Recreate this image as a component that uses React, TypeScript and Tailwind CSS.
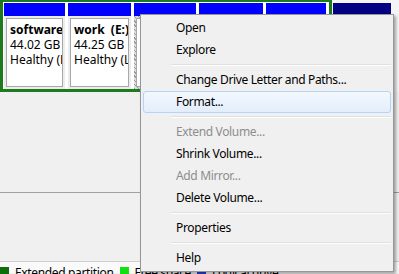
const volumes = [
  { w: 'w-[61px]', name: 'software (D:)', size: '44.02 GB NTFS', status: 'Healthy (Logical Drive)' },
  { w: 'w-[63px]', name: 'work  (E:)', size: '44.25 GB NTFS', status: 'Healthy (Logical Drive)' },
  { w: 'w-[62px]', name: 'media (F:)', size: '40.00 GB NTFS', status: 'Healthy (Logical Drive)', selected: true },
  { w: 'w-[64px]', name: 'games (G:)', size: '40.00 GB NTFS', status: 'Healthy (Logical Drive)' },
  { w: 'w-[60px]', name: 'backup (H:)', size: '30.00 GB NTFS', status: 'Healthy (Logical Drive)' },
];

const menu: ({ label: string; disabled?: boolean; active?: boolean } | 'sep')[] = [
  { label: 'Open' },
  { label: 'Explore' },
  'sep',
  { label: 'Change Drive Letter and Paths...' },
  { label: 'Format...', active: true },
  'sep',
  { label: 'Extend Volume...', disabled: true },
  { label: 'Shrink Volume...' },
  { label: 'Add Mirror...', disabled: true },
  { label: 'Delete Volume...' },
  'sep',
  { label: 'Properties' },
  'sep',
  { label: 'Help' },
];

const App = () => {
  return (
    <div className="relative w-[399px] h-[274px] overflow-hidden bg-[#f0f0f0] font-['Noto_Sans',sans-serif] text-[12px] tracking-[-0.35px] text-black">
      {/* disk strip */}
      <div className="flex h-[92px] bg-[#f4f4f4]">
        <div className="flex gap-[3px] w-[332px] h-full border-[3px] border-t-[2px] border-[#1d7a1d] bg-white pl-[1px] pt-[1px]">
          {volumes.map((v) => (
            <div key={v.name} className={`${v.w} flex flex-col shrink-0`}>
              <div className="h-[13px] bg-[#0000ff]" />
              <div
                className={`flex-1 p-[2px] ${v.selected ? 'bg-[repeating-linear-gradient(45deg,#9a9a9a_0_1px,#dcdcdc_1px_3px)]' : 'bg-[#ececec]'}`}
              >
                <div className="h-full border border-[#a8a8a8] bg-white pl-[3px] pt-[3px] overflow-hidden whitespace-pre leading-[15px] tracking-normal">
                  <div className="font-bold">{v.name}</div>
                  <div>{v.size}</div>
                  <div>{v.status}</div>
                </div>
              </div>
            </div>
          ))}
        </div>
        <div className="pl-[1px] pt-[3px]">
          <div className="w-[58px] h-[12px] bg-[#000080]" />
        </div>
      </div>

      {/* lower panes */}
      <div className="h-[101px] border-b border-[#a0a0a0]" />
      <div className="h-[69px] border-b border-[#d0d0d0]" />
      <div className="flex items-start gap-[6px] h-[11px] bg-[#fafafa] pt-[4px] whitespace-nowrap">
        <div className="w-[9px] h-[9px] mt-[1px] bg-[#0b6e0b]" />
        <span className="leading-[14px]">Extended partition</span>
        <div className="w-[9px] h-[9px] mt-[1px] bg-[#11e011]" />
        <span className="leading-[14px]">Free space</span>
        <div className="w-[9px] h-[9px] mt-[1px] bg-[#2b3fd0]" />
        <span className="leading-[14px]">Logical drive</span>
      </div>

      {/* context menu */}
      <div className="absolute left-[140px] top-[14px] w-[254px] h-[258px] border border-[#979797] bg-[#f0f0f0] p-[2px] shadow-[2px_2px_3px_rgba(0,0,0,0.35)]">
        {menu.map((m, i) =>
          m === 'sep' ? (
            <div key={i} className="h-[8px] ml-[28px] flex flex-col justify-center">
              <div className="h-[1px] bg-[#e0e0e0]" />
              <div className="h-[1px] bg-white" />
            </div>
          ) : (
            <div
              key={i}
              className={`h-[22px] pl-[32px] flex items-center rounded-[3px] border whitespace-nowrap ${
                m.active ? 'border-[#b4d3f5] bg-[linear-gradient(#f3f8fd,#e3eefb)]' : 'border-transparent'
              } ${m.disabled ? 'text-[#8d8d8d]' : 'text-black'}`}
            >
              {m.label}
            </div>
          )
        )}
      </div>
    </div>
  );
};

export default App;
